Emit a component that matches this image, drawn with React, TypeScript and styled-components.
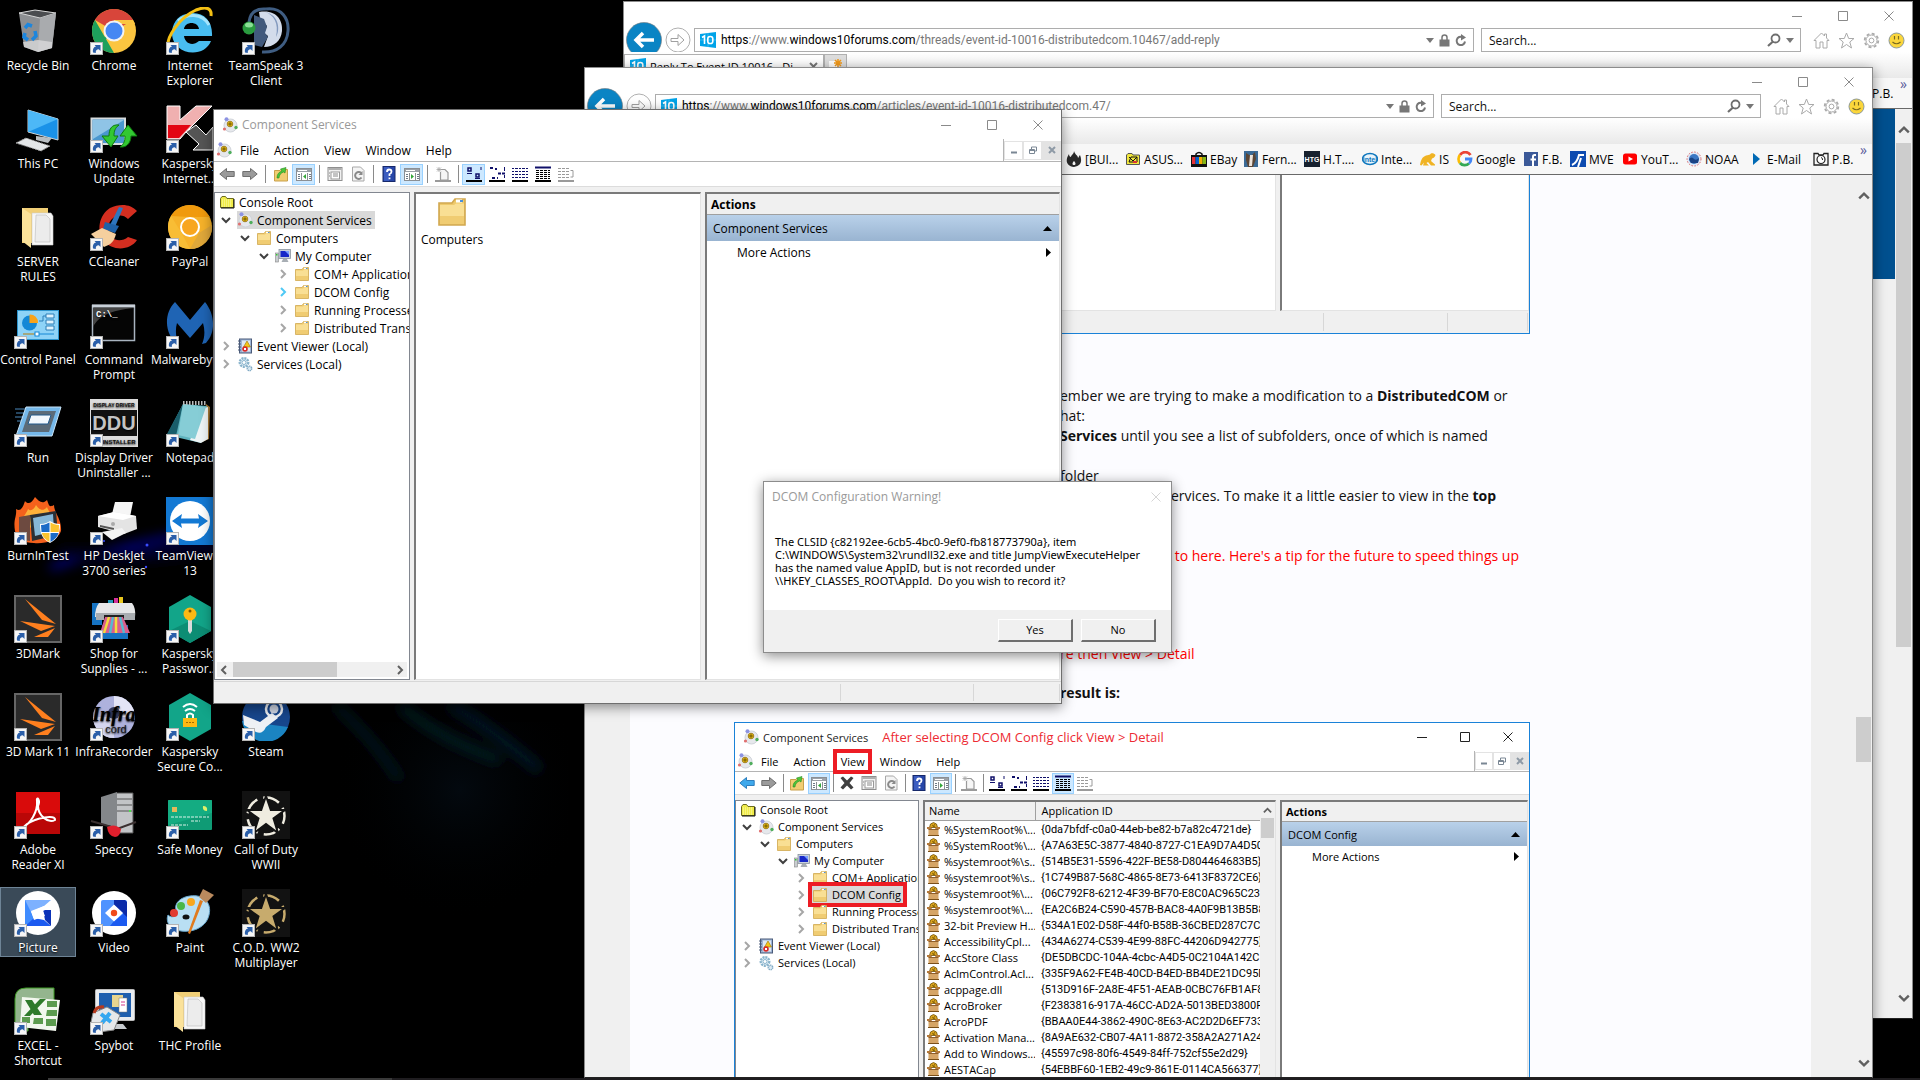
import React from 'react';
import styled, { createGlobalStyle, css, ThemeProvider } from 'styled-components';

/* ---------------------------------------------------------------- base */

const Global = createGlobalStyle`
  html, body { margin: 0; padding: 0; background: #000; overflow: hidden; }
  *, *::before, *::after { box-sizing: border-box; }
  button, input { font: inherit; color: inherit; }
  button { background: none; border: 0; padding: 0; text-align: left; cursor: default; }
  svg { display: block; flex: none; }
`;

const ui = '"Open Sans", "Noto Sans", sans-serif';

const Desktop = styled.main`
  position: relative;
  width: 100%;
  height: 100vh;
  overflow: hidden;
  background: #000;
  color: #000;
  font-family: ${ui};
  font-size: 12px;
  line-height: 15px;
`;

const Wallpaper = styled.svg`
  position: absolute;
  inset: 0;
`;

/* ------------------------------------------------------- desktop icons */

const IconGrid = styled.div`
  position: relative;
  display: grid;
  width: max-content;
  padding-top: 5px;
  grid-template-columns: repeat(4, 76px);
  grid-template-rows: repeat(11, 98px);
  align-items: start;
`;

const IconCell = styled.button<{ $col: number; $row: number; $selected?: boolean }>`
  grid-column: ${p => p.$col};
  grid-row: ${p => p.$row};
  display: flex;
  flex-direction: column;
  align-items: center;
  gap: 3px;
  height: 70px;
  padding-top: 2px;
  color: #fff;
  white-space: pre;
  text-align: center;
  text-shadow: 0 1px 2px #000;
  ${p => p.$selected && css`
    background: #3a4a58;
    box-shadow: inset 0 0 0 1px #6e8496;
  `}
`;

const Shortcut = () => (
  <g>
    <rect x="0.5" y="35.500" width="12" height="12" fill="#f6f6f6" stroke="#b4b4b4" />
    <path d="M3 45.500C2.500 41.500 4 40 6 39.500L4.500 38H10.500V44L8.800 42.200C6.500 42.500 5.500 43.500 5.800 46Z" fill="#2b5fa9" />
  </g>
);

const star = 'M24 5L28.800 19H43L31.500 27.500L36 42L24 33L12 42L16.500 27.500L5 19H19.200Z';

const starIcon = (color: string) => (
  <>
    <rect width="48" height="48" fill="#121212" />
    <circle cx="24" cy="25" r="18.500" fill="none" stroke={color} strokeWidth="2.500" strokeDasharray="17 6.200" strokeDashoffset="9" />
    <path d={star} fill={color} stroke="#121212" strokeWidth="2" />
  </>
);

const folderArt = (
  <>
    <path d="M8 5H34V40H8Z" fill="#f1cf77" />
    <path d="M18 10H37L39 13V42H18Z" fill="#f7f7f7" stroke="#ccc" strokeWidth="0.6" />
    <path d="M22 12H32L36 16V39H21Z" fill="#ececec" stroke="#bbb" strokeWidth="0.6" />
    <path d="M8 5L17 11V45L8 38Z" fill="#fbe29a" />
  </>
);

const markArt = (
  <>
    <rect x="1" y="1" width="46" height="46" fill="#2a2a2a" stroke="#666" strokeWidth="2" />
    <path d="M11 4L42 29L28 25Z" fill="#ff7f1e" />
    <path d="M6 26L41 31L27 36Z" fill="#ff7f1e" />
    <path d="M20 42L41 33L34 42Z" fill="#ff7f1e" />
  </>
);

const hexArt = <path d="M24 0L45 12V36L24 48L3 36V12Z" fill="#12a589" />;

const art: Record<string, React.ReactNode> = {
  bin: (
    <>
      <path d="M5 6L21 3L42 6L38 41L24 45L10 40Z" fill="#8d8f92" />
      <path d="M5 6L21 3L42 6L26 11Z" fill="#4b4d50" stroke="#d5d5d5" strokeWidth="1" />
      <path d="M26 11L42 6L38 41L24 45Z" fill="#a9abae" />
      <path d="M9 35L24 33L38 35L38 41L24 45L10 40Z" fill="#d9dadb" opacity="0.8" />
      <path d="M11 21L14 17.500L18 19M21 24L22 29L18 33M14 33L10 30L11 26" fill="none" stroke="#1d86dd" strokeWidth="3.500" />
    </>
  ),
  pc: (
    <>
      <path d="M14 5L44 14V35L14 27Z" fill="#1a92e8" stroke="#cfd6da" strokeWidth="1" />
      <path d="M14 5L44 14L14 27Z" fill="#4db8f7" />
      <path d="M22 31L38 33L34 38L22 35Z" fill="#b8bec2" />
      <path d="M2 38L12 33L36 41L27 46Z" fill="#e3e6e8" stroke="#999" strokeWidth="1" strokeDasharray="2 1" />
    </>
  ),
  folder: folderArt,
  control: (
    <>
      <rect x="3.500" y="9.500" width="41" height="29" fill="#8ed3f7" stroke="#2c93cc" />
      <circle cx="15.500" cy="22" r="7.500" fill="#1488d6" />
      <path d="M15.500 22V13.500A8 8 0 0 1 24 22Z" fill="#f7a31b" />
      <path d="M25 20H29V15H33" fill="none" stroke="#2c7fb8" />
      <path d="M32 13H40V17H32ZM32 19H40V23H32ZM32 25H40V29H32Z" fill="#dff3fd" stroke="#2c7fb8" />
      <path d="M9 33H40" stroke="#1488d6" /><path d="M9 33H20" stroke="#f7a31b" /><rect x="21" y="31" width="4" height="4" fill="#fff" stroke="#1488d6" />
    </>
  ),
  run: (
    <>
      <path d="M1 10H14M2 14H12M1 18H11M3 22H9" stroke="#4b89bd" />
      <path d="M12 8H47L38 37H2Z" fill="#75b8ea" stroke="#c8e4f8" />
      <path d="M15 12H42L35 33H8Z" fill="#5c6b78" />
      <path d="M17 16H37L34 25H14Z" fill="#f3f8fd" stroke="#235a8c" />
    </>
  ),
  burn: (
    <>
      <path d="M1 34C-1 22 3 20 2 12C7 15 9 10 11 4C14 8 18 6 21 0C25 4 28 8 33 3C35 8 35 11 40 8C40 16 48 22 47 34C44 44 30 47 20 46C10 46 3 42 1 34Z" fill="#f4611c" />
      <path d="M8 30C7 20 12 18 14 12C17 15 20 12 22 8C26 14 30 14 33 10C35 16 42 22 40 32Z" fill="#fdb13a" />
      <path d="M5 20L16 18V44L5 42Z" fill="#6d4a40" />
      <path d="M16 18L42 14L44 38L18 44Z" fill="#2a2f35" /><path d="M19 21L39 17L40 34L21 39Z" fill="#86b8d8" />
      <path d="M26 27C31 27 34 25 36 24C39 26 42 27 46 27C46 38 43 42 36 46C29 42 26 38 26 27Z" fill="#fff" />
      <path d="M27 28C31 28 34 26 35.500 25.500V35H27.500ZM36.500 36H44.500C43.500 40 41 42.500 36.500 45Z" fill="#1a6bc7" />
      <path d="M36.500 25.500C39 27 42 28 45 28L44.800 35H36.500ZM35.500 36H27.800C29 40 31 42.500 35.500 45Z" fill="#fbc32f" />
    </>
  ),
  mark: markArt,
  adobe: (
    <>
      <rect x="2" y="1" width="44" height="42" fill="#d90b0b" /><rect x="2" y="22" width="44" height="21" fill="#a50505" opacity="0.6" />
      <path d="M9 36C16 33 24 21 23 10C22 5 27 8 24 15C24 24 34 33 41 29C42 23 22 27 13 33C8 37 8 39 10 37" fill="none" stroke="#fff" strokeWidth="2" />
    </>
  ),
  picture: (
    <>
      <circle cx="24" cy="24" r="22" fill="#fff" />
      <path d="M11 11H37L30 17L17 23L20 30L11 37Z" fill="#7db1ff" /><path d="M11 11L17 23L20 30L11 37Z" fill="#3f8cff" />
      <path d="M11 37L20 29L30 31L37 37Z" fill="#1b5af0" /><path d="M29 21H37V37L31 31Z" fill="#0a32b8" />
      <path d="M17 22L30 17L31 21L29 22L31 27L20 31Z" fill="#fff" />
    </>
  ),
  excel: (
    <>
      <path d="M1 12Q1 1 12 1H40V22H14V44H1Z" fill="#94b58e" stroke="#3f9a24" />
      <path d="M8 10L46 13L42 44L6 40Z" fill="#f2f7ee" />
      <path d="M33 14H43V20H33ZM33 23H43V29H32ZM32 32H42V39H32ZM20 31H29V37H19ZM8 30H16V36H8Z" fill="#5c9b4f" />
      <path d="M11 13L18 13L28 28H20ZM26 12H32L16 29H10Z" fill="#2e7a2a" />
    </>
  ),
  chrome: (
    <>
      <circle cx="24" cy="24" r="22" fill="#fbc540" />
      <path d="M24 24L4.950 13A22 22 0 0 1 43.050 13Z" fill="#d8453a" />
      <path d="M4.950 13L14.500 29.500L24 34L24 46A22 22 0 0 1 4.950 13Z" fill="#1ea05c" />
      <path d="M33.500 29.500L24 46L16 32Z" fill="#fbc540" />
      <path d="M24 13H43.050A22 22 0 0 1 45 17H24Z" fill="#fbc540" />
      <circle cx="24" cy="24" r="10.500" fill="#f3f3f3" /><circle cx="24" cy="24" r="8.500" fill="#4587f3" />
    </>
  ),
  update: (
    <>
      <path d="M1.500 13.500H35V39H1.500Z" fill="#4a97cf" stroke="#d6dbde" strokeWidth="2" /><path d="M3 15H34L3 34Z" fill="#8fc4e6" />
      <path d="M29 20C21 19 19 25 19 31H12L21 42L28 31H24C24 26 25 23 29 20Z" fill="#32c832" stroke="#0e7a0e" />
      <path d="M30 42C38 43 41 36 41 31H47L38 20L30 31H35C35 36 34 39 30 42Z" fill="#32c832" stroke="#0e7a0e" />
    </>
  ),
  ccleaner: (
    <>
      <path d="M47 8L38 16C30 8 18 15 18 26C19 38 31 40 38 34L47 37C40 48 22 48 14 38C6 28 9 12 20 5C30 0 41 1 47 8Z" fill="#d42e20" />
      <path d="M29 4L33 5L25 24L20 22Z" fill="#2e75bd" /><path d="M15 19L29 23L25 30L13 26Z" fill="#1f62a8" />
      <path d="M12 25L26 31C24 38 22 41 14 44L1 31Z" fill="#f5cf9e" />
    </>
  ),
  cmd: (
    <>
      <rect x="2.500" y="4.500" width="42" height="35" fill="#050505" stroke="#a8b3bf" strokeWidth="1.500" />
      <rect x="2" y="3.500" width="43" height="3" fill="#c8d0d8" /><path d="M3 7H44C20 9 8 16 3 26Z" fill="#444" />
      <text x="6" y="16" fontFamily="Liberation Mono, monospace" fontSize="9" fontWeight="700" fill="#fff">C:\_</text>
    </>
  ),
  ddu: (
    <>
      <rect width="48" height="48" fill="#dcdcdc" /><rect x="1" y="11" width="46" height="26" fill="#111" />
      <text x="24" y="8" textAnchor="middle" fontFamily="Liberation Sans, sans-serif" fontSize="5" fontWeight="700" fill="#111">DISPLAY DRIVER</text>
      <text x="24" y="31" textAnchor="middle" fontFamily="Liberation Sans, sans-serif" fontSize="20" fontWeight="700" fill="#c4c4c4">DDU</text>
      <text x="29" y="45" textAnchor="middle" fontFamily="Liberation Sans, sans-serif" fontSize="6" fontWeight="700" fill="#111">INSTALLER</text>
    </>
  ),
  printer: (
    <>
      <path d="M25 5H43L40 20L22 17Z" fill="#f6f6f6" /><path d="M8 19L24 15L46 19L47 32L34 37L8 30Z" fill="#e4e4e4" />
      <path d="M8 19L24 15L46 19L33 23Z" fill="#fff" /><circle cx="23" cy="27" r="2" fill="#aaa" />
      <path d="M10 28L24 31V33L10 30Z" fill="#555" /><path d="M12 35L32 31L36 36L22 43Z" fill="#f3f3f3" />
    </>
  ),
  shop: (
    <>
      <path d="M2 8H12V44H38V30H2Z" fill="#1673c2" /><path d="M18 5H23V10H18Z" fill="#29b" /><path d="M24 3H28V10H24Z" fill="#d3329a" /><path d="M29 2H33V10H29Z" fill="#e9c71e" />
      <path d="M15 22H33L40 38H10Z" fill="#d95f8e" /><path d="M19 22L14 38M26 22V38" stroke="#f4dc3c" strokeWidth="2.500" /><path d="M23 22L20 38M30 22L34 38" stroke="#58b9cf" strokeWidth="2.500" />
      <path d="M9 8H42Q46 13 45 22H5Q5 13 9 8Z" fill="#e6e7e8" /><path d="M6 18H45V25H34V20H14V25H6Z" fill="#a9adb1" /><path d="M14 20H34V22H14Z" fill="#222" />
    </>
  ),
  infra: (
    <>
      <circle cx="24" cy="24" r="21" fill="#aeb2dd" /><path d="M24 3A21 21 0 0 1 45 24L24 24Z" fill="#e3e4f6" /><path d="M24 45A21 21 0 0 1 3 24L24 24Z" fill="#d4d5ee" />
      <circle cx="24" cy="20" r="6" fill="#333a60" />
      <text x="24" y="28" textAnchor="middle" fontFamily="Liberation Serif, serif" fontStyle="italic" fontWeight="700" fontSize="20" fill="#000">Infra</text>
      <text x="26" y="40" textAnchor="middle" fontFamily="Liberation Sans, sans-serif" fontSize="11" fill="#111">cord</text>
    </>
  ),
  speccy: (
    <>
      <path d="M26 2H43V42H26Z" fill="#c2c4c6" stroke="#555" /><path d="M27 8H42M27 14H42M27 20H42" stroke="#555" /><path d="M11 6L27 1V36L11 33Z" fill="#84878a" />
      <circle cx="40" cy="20" r="1" fill="#3f3" />
      <path d="M1 30L15 34L27 38L46 31" fill="none" stroke="#3a3030" strokeWidth="2" /><path d="M17 36Q25 32 31 38Q30 46 25 46Q18 45 17 36Z" fill="#e01f2c" />
    </>
  ),
  video: (
    <>
      <circle cx="24" cy="24" r="22" fill="#fff" /><rect x="11" y="11" width="26" height="26" rx="2" fill="#4f93ff" />
      <path d="M37 22V37H20L24 32Z" fill="#1b5af0" /><path d="M24 11H35L37 13V28L24 16Z" fill="#0a2aa8" />
      <path d="M24 15.500L33 24L24 32.500L15 24Z" fill="#fff" /><circle cx="24" cy="24" r="3.200" fill="#f04a18" />
    </>
  ),
  spybot: (
    <>
      <rect x="5.500" y="2.500" width="39" height="31" rx="1" fill="#e9ecef" stroke="#bbb" /><rect x="9" y="6" width="32" height="24" fill="#1f5fae" />
      <path d="M22 8H33V20H22Z" fill="#e6d48f" /><path d="M29 11H37V25H29Z" fill="#fff" stroke="#777" strokeWidth="0.5" /><path d="M31 15H35M31 18H35" stroke="#d23a8c" />
      <path d="M26 37H33L37 42H24Z" fill="#c7cbcf" />
      <path d="M3 26L17 20L30 28L24 43L9 45L1 35Z" fill="#e6e8ea" stroke="#888" /><path d="M4 26Q6 19 14 20" fill="none" stroke="#b63a1e" strokeWidth="3" />
      <path d="M11 27L21 35M20 26L12 36" stroke="#35a7f0" strokeWidth="4" />
    </>
  ),
  ie: (
    <>
      <path fillRule="evenodd" d="M46 29H18C19 36 26 40 33 34H45C40 47 22 49 12 40C1 30 6 10 20 7C36 3 47 13 46 29ZM18 22H33C32 14 19 14 18 22Z" fill="#49bdf0" />
      <path d="M12 14C20 7 36 5 43 18" fill="none" stroke="#a4e3fb" strokeWidth="3" />
      <path d="M3 42C-2 32 14 10 30 3C40 -1 46 1 45 9" fill="none" stroke="#f4c014" strokeWidth="3" />
    </>
  ),
  kaspersky: (
    <>
      <path d="M1 1H14V15L30 1H46L20 27L14 34H1Z" fill="#f0b0b0" stroke="#fff" /><path d="M2 20H25L13 33H2Z" fill="#e30613" />
      <path d="M20 27L30 20L40 30L47 22V45H27L33 39Z" fill="#555" stroke="#fff" />
    </>
  ),
  paypal: (
    <>
      <circle cx="24" cy="24" r="22" fill="#f6b22a" /><path d="M24 14L4.950 13A22 22 0 0 1 43.050 13L44 14Z" fill="#f09a0d" />
      <path d="M5 13L15 29L24 46A22 22 0 0 1 5 13Z" fill="#f8bd35" /><path d="M33 30L46 22A22 22 0 0 1 24 46Z" fill="#e0a83a" />
      <circle cx="24" cy="24" r="9" fill="#f8a61f" stroke="#fff" strokeWidth="2" />
    </>
  ),
  malware: <path d="M9 1L24 19L39 1C48 12 51 30 40 42L36 43C39 36 39 29 37 22L24 37L11 22C9 29 10 36 12 43C0 36 -4 14 9 1Z" fill="#1f64b4" />,
  notepad: (
    <>
      <path d="M40 5L44 8L43 40L36 43Z" fill="#a87a35" /><path d="M17 5L41 7L35 44L1 36Z" fill="#5fb3be" /><path d="M17 5L1 35L10 37Z" fill="#195d6a" />
      <path d="M38 9L42 8V40L35 44L24 41Z" fill="#eef4f5" /><path d="M17 5L40 8L29 40L12 36Z" fill="#86cdd6" /><path d="M17 4H41" stroke="#bbb" strokeWidth="4" strokeDasharray="1.500 1.500" />
    </>
  ),
  teamviewer: (
    <>
      <rect width="48" height="48" fill="#1379d4" /><circle cx="24" cy="24" r="20" fill="#fff" />
      <path d="M6 24L16 17L15 21.500H33L32 17L42 24L32 31L33 26.500H15L16 31Z" fill="#1379d4" />
    </>
  ),
  kpass: (
    <>
      {hexArt}<path d="M3 36L24 26L45 36L24 48Z" fill="#0c8d74" />
      <path d="M22 24H26V36L24 39L22 36Z" fill="#d8dcdc" /><circle cx="24" cy="19" r="6.500" fill="#fcb913" /><circle cx="24" cy="16" r="1.500" fill="#7a5600" />
    </>
  ),
  ksecure: (
    <>
      {hexArt}<path d="M17 14Q24 8 31 14M19 18Q24 14 29 18" fill="none" stroke="#fff" strokeWidth="2" />
      <path d="M21 26V22Q24 19 27 22V26" fill="none" stroke="#fff" strokeWidth="2" /><rect x="17" y="25" width="14" height="9" fill="#fcb913" />
      <path d="M20 29.500H28" stroke="#a06c00" strokeDasharray="2 1" />
    </>
  ),
  money: (
    <>
      <rect x="2" y="9" width="44" height="30" rx="1" fill="#0f9b75" /><path d="M2 9H46V22L2 34Z" fill="#18b78b" opacity="0.600" />
      <rect x="6" y="16" width="5" height="5" fill="#e5b95a" /><path d="M37 15Q42 15 41 20Q36 20 37 15Z" fill="#dff06a" />
      <path d="M5 26H43M25 30H34M5 34H22" stroke="#d7f2e8" strokeDasharray="3 1" />
    </>
  ),
  paint: (
    <>
      <path d="M24 7C38 5 46 14 43 26C40 40 22 46 8 40C2 38 0 30 2 26C6 30 13 27 10 21C8 14 15 8 24 7Z" fill="#b9dff3" stroke="#6aa9cf" />
      <circle cx="8" cy="24" r="4" fill="#e23b31" /><circle cx="15" cy="17" r="4" fill="#4bb748" /><circle cx="25" cy="13" r="4" fill="#f9a61c" /><ellipse cx="20" cy="28" rx="3.500" ry="2.500" fill="#111" />
      <path d="M37 12L24 45L22 44L34 11Z" fill="#e07a1c" /><path d="M33 8L37 0L48 6L40 14Z" fill="#b98a5e" />
    </>
  ),
  teamspeak: (
    <>
      <path d="M24 2C12 1 8 8 7 15M24 2C40 0 47 12 46 24C45 38 35 46 20 45" fill="none" stroke="#3f5d82" strokeWidth="3" />
      <path d="M17 5C34 2 41 13 40 24C39 34 32 40 22 40L26 29L22 26L25 19L18 12Z" fill="#d3dceb" /><path d="M23 5C32 8 37 16 34 30C38 24 38 8 23 5Z" fill="#8299be" />
      <path d="M12 8L22 12L25 20L23 26L26 30L20 40L12 38Z" fill="#41597c" />
      <circle cx="7" cy="21" r="6.500" fill="#2a9b3f" /><ellipse cx="7" cy="18" rx="4" ry="2.500" fill="#8be096" />
    </>
  ),
  steam: (
    <>
      <circle cx="24" cy="24" r="24" fill="#17468c" /><path d="M0 28A24 24 0 0 0 46 34Z" fill="#1b84c2" />
      <path d="M1 22L18 29L30 20L36 25L24 34Q20 43 12 38L2 32Z" fill="#eef1f5" />
      <circle cx="32" cy="16" r="8" fill="none" stroke="#eef1f5" strokeWidth="2.500" /><circle cx="32" cy="16" r="4.500" fill="#cfd6e4" />
    </>
  ),
  cod: starIcon('#efece0'),
  codmp: starIcon('#c7ab6d'),
};

type DesktopItem = [string, string, number, number, boolean];
const items: DesktopItem[] = [
  ['bin', 'Recycle Bin', 1, 1, false], ['pc', 'This PC', 1, 2, false], ['folder', 'SERVER\nRULES', 1, 3, false],
  ['control', 'Control Panel', 1, 4, true], ['run', 'Run', 1, 5, true], ['burn', 'BurnInTest', 1, 6, true],
  ['mark', '3DMark', 1, 7, true], ['mark', '3D Mark 11', 1, 8, true], ['adobe', 'Adobe\nReader XI', 1, 9, true],
  ['picture', 'Picture', 1, 10, true], ['excel', 'EXCEL -\nShortcut', 1, 11, true],
  ['chrome', 'Chrome', 2, 1, true], ['update', 'Windows\nUpdate', 2, 2, true], ['ccleaner', 'CCleaner', 2, 3, true],
  ['cmd', 'Command\nPrompt', 2, 4, true], ['ddu', 'Display Driver\nUninstaller ...', 2, 5, true],
  ['printer', 'HP DeskJet\n3700 series', 2, 6, true], ['shop', 'Shop for\nSupplies - ...', 2, 7, true],
  ['infra', 'InfraRecorder', 2, 8, true], ['speccy', 'Speccy', 2, 9, true], ['video', 'Video', 2, 10, true], ['spybot', 'Spybot', 2, 11, true],
  ['ie', 'Internet\nExplorer', 3, 1, true], ['kaspersky', 'Kaspersky\nInternet...', 3, 2, true], ['paypal', 'PayPal', 3, 3, true],
  ['malware', 'Malwarebytes', 3, 4, true], ['notepad', 'Notepad', 3, 5, true], ['teamviewer', 'TeamViewer\n13', 3, 6, true],
  ['kpass', 'Kaspersky\nPasswor...', 3, 7, true], ['ksecure', 'Kaspersky\nSecure Co...', 3, 8, true],
  ['money', 'Safe Money', 3, 9, true], ['paint', 'Paint', 3, 10, true], ['folder', 'THC Profile', 3, 11, false],
  ['teamspeak', 'TeamSpeak 3\nClient', 4, 1, true], ['steam', 'Steam', 4, 8, true],
  ['cod', 'Call of Duty\nWWII', 4, 9, true], ['codmp', 'C.O.D. WW2\nMultiplayer', 4, 10, true],
];

const DesktopIcons = () => (
  <IconGrid>
    {items.map(([id, label, col, row, link]) => (
      <IconCell key={label} $col={col} $row={row} $selected={id === 'picture'}>
        <svg width="48" height="48" viewBox="0 0 48 48" aria-hidden="true">{art[id]}{link && <Shortcut />}</svg>
        {label}
      </IconCell>
    ))}
  </IconGrid>
);

/* -------------------------------------------------------- small glyphs */

const Chevron = ({ dir, color = '#606060', size = 10, weight = 2 }: { dir: 'up' | 'down' | 'left' | 'right'; color?: string; size?: number; weight?: number }) => {
  const d = { up: 'M1 7L5 3L9 7', down: 'M1 3L5 7L9 3', left: 'M7 1L3 5L7 9', right: 'M3 1L7 5L3 9' }[dir];
  return <svg width={size} height={size} viewBox="0 0 10 10"><path d={d} fill="none" stroke={color} strokeWidth={weight} /></svg>;
};

const ServicesIcon = ({ size = 16 }: { size?: number }) => (
  <svg width={size} height={size} viewBox="0 0 16 16">
    <circle cx="8.500" cy="8.500" r="6.500" fill="#e6e8ec" stroke="#d0d4da" />
    <circle cx="8" cy="7" r="2.800" fill="#f6c715" stroke="#8a6a10" strokeWidth="0.800" />
    <path d="M8 5V9M6 7H10" stroke="#4f3c00" strokeWidth="0.800" />
    <circle cx="4.500" cy="2.200" r="2" fill="#8d93e2" /><circle cx="2.500" cy="12" r="1.600" fill="#e07070" /><circle cx="14" cy="10.500" r="1.700" fill="#4fae5c" />
  </svg>
);

const FolderIcon = ({ size = 16 }: { size?: number }) => (
  <svg width={size} height={size} viewBox="0 0 16 16">
    <path d="M1.500 3.500H8L9.500 1.500H14.500V14.500H1.500Z" fill="#eec96b" stroke="#d1a850" strokeWidth="0.800" />
    <path d="M10 2.500H13" stroke="#fff" strokeWidth="1.500" /><path d="M12 2.500H13.500" stroke="#4a90d9" />
    <path d="M2 4.500H9L10 3.800H14V14H2Z" fill="#f9df94" /><path d="M2 10H14V14H2Z" fill="#f0cc72" />
  </svg>
);

const RootIcon = () => (
  <svg width="16" height="16" viewBox="0 0 16 16">
    <path d="M1.500 13.500V4.500L3 2.500H6.500L8 4.500H14.500V13.500Z" fill="#f0ec4a" stroke="#6c6c20" /><path d="M2 14H15V5" fill="none" stroke="#111" />
    <path d="M3 6H13M3 8H13M3 10H13M3 12H13" stroke="#fdfbb4" strokeDasharray="1 1" />
  </svg>
);

const ComputerIcon = () => (
  <svg width="16" height="16" viewBox="0 0 16 16">
    <rect x="0.500" y="5" width="3" height="9" fill="#c8ccd0" stroke="#888" strokeWidth="0.600" /><rect x="1" y="6" width="1.500" height="1.500" fill="#3c3" />
    <rect x="4" y="1.500" width="11.500" height="9" fill="#c8d0dc" stroke="#8a94a0" strokeWidth="0.800" /><rect x="5.500" y="3" width="8.500" height="6" fill="#1728c8" />
    <path d="M10 3H14V7Z" fill="#7aa0ff" /><path d="M8 11H12L13.500 14H6.500Z" fill="#a8aeb4" />
  </svg>
);

const EventIcon = () => (
  <svg width="16" height="16" viewBox="0 0 16 16">
    <rect x="2.500" y="1" width="12" height="14" fill="#9db4d6" stroke="#4a5a78" /><path d="M1 3H4M1 6H4M1 9H4M1 12H4" stroke="#4a5a78" />
    <rect x="5" y="2.500" width="8" height="11" fill="#dfe7f2" /><path d="M10 3L13.500 9H6.500Z" fill="#f5c518" stroke="#9a7400" strokeWidth="0.600" />
    <circle cx="8" cy="11" r="2.800" fill="#d92b2b" /><path d="M7 10L9 12M9 10L7 12" stroke="#fff" />
  </svg>
);

const GearsIcon = () => (
  <svg width="16" height="16" viewBox="0 0 16 16">
    <circle cx="7" cy="6.500" r="4.200" fill="#e6f1f8" stroke="#8ab4cc" strokeWidth="2.500" strokeDasharray="2 0.800" />
    <circle cx="7" cy="6.500" r="2" fill="#fff" stroke="#8ab4cc" />
    <circle cx="12.500" cy="12.500" r="2.200" fill="#dceaf3" stroke="#7fa9c4" strokeWidth="1.500" strokeDasharray="1.200 0.600" />
  </svg>
);

const BoxIcon = () => (
  <svg width="13" height="15" viewBox="0 0 13 15">
    <path d="M2.500 5.500L3.500 2L6.500 0.500L9.500 2L10.500 5.500Z" fill="#dca51e" stroke="#6e5208" strokeWidth="0.800" /><path d="M5 3L8 5M8 2L6 5" stroke="#7a5a08" strokeWidth="0.800" />
    <path d="M0 5H4L5 7H0ZM13 5H9L8 7H13Z" fill="#b5793a" /><rect x="1.500" y="7" width="10" height="6.500" fill="#d6a566" /><path d="M1.500 7.500H11.500" stroke="#8e5f2c" />
    <path d="M1 13.500H12" stroke="#7a4f18" />
  </svg>
);

/* ------------------------------------------------------ toolbar glyphs */

const arrowArt = (fill: string, stroke: string, flip: boolean) => (
  <g transform={flip ? 'translate(16 0) scale(-1 1)' : undefined}>
    <path d="M0.800 8L7.500 2.500V5.500H15.200V10.500H7.500V13.500Z" fill={fill} stroke={stroke} />
  </g>
);

const paneArt = (tri: string) => (
  <>
    <rect x="0.500" y="2.500" width="15" height="12" fill="#fff" stroke="#8b8f94" /><rect x="1" y="3" width="14" height="3" fill="#9ba1a8" />
    <path d="M2 4.500H11" stroke="#fff" /><path d="M5.500 7V14M11.500 7V14" stroke="#8b8f94" /><path d="M2 8.500H4M2 10.500H4M2 12.500H4M13 8.500H15M13 10.500H15M13 12.500H15" stroke="#6d7a88" />
    <path d={tri} fill="#35a83a" />
  </>
);

const navy = '#10106a';
const tools: Record<string, React.ReactNode> = {
  back: arrowArt('#9b9b9b', '#6f6f6f', false),
  backOn: arrowArt('#3fa9ec', '#2f7fbd', false),
  fwd: arrowArt('#9b9b9b', '#6f6f6f', true),
  up: (
    <>
      <path d="M1.500 4.500H7L8 3.500H14.500V15H1.500Z" fill="#f2cd73" stroke="#c9a04a" />
      <path d="M4 12C4 8 6 6 9 5L7.500 3L13 1.500L12 7L10.500 6C8 7 6 9 6 12Z" fill="#4cc83c" stroke="#2a8a20" strokeWidth="0.600" />
    </>
  ),
  tree: paneArt('M10 8V13L7 10.500Z'),
  pane: paneArt('M7 8V13L10 10.500Z'),
  del: <path d="M1.500 3L4 1.500L8 5.500L12 1.500L14.500 3L10.500 8L14.500 12.500L12 14.500L8 10.500L4 14.500L1.500 12.500L5.500 8Z" fill="#3f3f3f" />,
  props: <><rect x="1" y="1.500" width="14" height="13" fill="#f1f1f1" stroke="#8f8f8f" /><rect x="1.500" y="2" width="13" height="2" fill="#b0b0b0" /><rect x="4" y="6" width="8.500" height="7" fill="#fff" stroke="#999" /><path d="M6 8H11M6 10H11M2 7H3M2 10H3" stroke="#888" /></>,
  refresh: <><path d="M2.500 1H10.500L14 4.500V15H2.500Z" fill="#f4f4f4" stroke="#a8a8a8" /><path d="M11.500 7.500A3.500 3.500 0 1 0 11.500 11.500" fill="none" stroke="#8a8a8a" strokeWidth="2" /><path d="M12.500 5V9H8.500Z" fill="#8a8a8a" /></>,
  help: <><rect x="2" y="0.500" width="12" height="15" fill="#2746a8" stroke="#16286a" /><rect x="3" y="1" width="5" height="14" fill="#4a6ad0" opacity="0.600" /><path d="M6 6Q6 3.500 8.200 3.500Q10.500 3.500 10.500 5.800Q10.500 7.300 8.500 8.300V10M8.500 11.500V13.300" fill="none" stroke="#fff" strokeWidth="1.800" /></>,
  newv: <><path d="M5.500 3.500H10L13 6.500V14H5.500V6" fill="#f6f6f6" stroke="#9a9a9a" strokeWidth="1.200" /><path d="M4 1V6M1.500 3.500H6.500M2 1.500L6 5.500M6 1.500L2 5.500" stroke="#a4a4a4" strokeWidth="0.800" /><path d="M0 15H16" stroke="#9a9a9a" strokeWidth="2" /></>,
  v1: <><path d="M2 2H5V5H2ZM10 8H13V11H10Z" fill="none" stroke={navy} strokeWidth="1.500" /><path d="M1 7.500H6M9 12.500H14M15 1V4" stroke={navy} /><path d="M0 15H16" stroke="#000" strokeWidth="2" /></>,
  v2: <><path d="M1 2H4M6 3H8M9 7.500H12M13 7.500H16M3 12H6M8 12H9" stroke={navy} strokeWidth="1.800" /><path d="M15.500 1V5M15.500 9V12" stroke={navy} /><path d="M0 15H16" stroke="#000" strokeWidth="2" /></>,
  v3: <><path d="M0 2.500H16M0 5.500H16M0 8.500H16M0 11.500H16" stroke={navy} strokeDasharray="2 1 3 1" /><path d="M0 15H16" stroke="#000" strokeWidth="2" /></>,
  v4: <><path d="M0 1.500H16" stroke={navy} strokeWidth="2" /><path d="M1 4.500H15M1 6.500H15M1 8.500H15M1 10.500H15M1 12.500H15" stroke="#000" strokeDasharray="3 1" /><path d="M0 15H16" stroke="#000" strokeWidth="2" /></>,
  v5: <><path d="M0 2.500H11M0 5.500H11M0 8.500H11M0 11.500H11" stroke="#9a9a9a" strokeDasharray="3 1" /><path d="M12.500 4.500H15V11H12.500" fill="none" stroke="#9a9a9a" /><path d="M0 15H16" stroke="#9a9a9a" strokeWidth="2" /></>,
};

/* ------------------------------------------------ management console UI */

const full = { font: 12, title: 29, menu: 22, bar: 24, btn: 23, sep: 8, row: 18, indent: 19, head: 21, section: 26, cols: '196px 287px 1fr', caption: 46, mdi: 19, titleColor: '#999', edge: '#6f6f6f', gap: 5 };
const small = { font: 11, title: 28, menu: 20, bar: 22, btn: 22, sep: 6, row: 17, indent: 18, head: 20, section: 24, cols: '184px 353px 1fr', caption: 43, mdi: 18, titleColor: '#222', edge: '#1a82d8', gap: 6 };

const Frame = styled.section`
  display: flex;
  flex-direction: column;
  height: 100%;
  border: 1px solid ${p => p.theme.edge};
  background: #fff;
  font-size: ${p => p.theme.font}px;
  line-height: 15px;
`;

const TitleBar = styled.header`
  display: flex;
  align-items: center;
  gap: 4px;
  height: ${p => p.theme.title}px;
  padding-left: 8px;
  color: ${p => p.theme.titleColor};
  flex: none;
`;

const Note = styled.span`
  margin-left: 10px;
  color: #ed2b33;
  font-size: 13px;
`;

const Captions = styled.div<{ $color: string }>`
  display: flex;
  margin-left: auto;
  color: ${p => p.$color};
`;

const CaptionButton = styled.button<{ $w: number }>`
  display: grid;
  place-items: center;
  width: ${p => p.$w}px;
  height: 24px;
`;

const captionPaths = ['M0 5.500H10', 'M0.500 0.500H9.500V9.500H0.500Z', 'M0.500 0.500L9.500 9.500M9.500 0.500L0.500 9.500'];
const WindowButtons = ({ color, w }: { color: string; w: number }) => (
  <Captions $color={color}>
    {['Minimize', 'Maximize', 'Close'].map((n, i) => (
      <CaptionButton key={n} $w={w} aria-label={n}>
        <svg width="10" height="10" viewBox="0 0 10 10"><path d={captionPaths[i]} fill="none" stroke="currentColor" /></svg>
      </CaptionButton>
    ))}
  </Captions>
);

const MenuBar = styled.nav`
  display: flex;
  align-items: center;
  flex: none;
  height: ${p => p.theme.menu + 1}px;
  padding-left: 2px;
  border-bottom: 1px solid #b4b4b4;
`;

const MenuItem = styled.button<{ $marked?: boolean }>`
  position: relative;
  padding: 0 7px 0 8px;
  ${p => p.$marked && css`
    &::after {
      content: '';
      position: absolute;
      inset: -5px 0;
      border: 4px solid #ed1c24;
    }
  `}
`;

const MdiGroup = styled.div`
  display: flex;
  align-self: stretch;
  align-items: center;
  margin-left: auto;
  border-left: 1px solid #b4b4b4;
`;

const MdiButton = styled.button<{ $off?: boolean }>`
  display: grid;
  place-items: center;
  width: ${p => p.theme.mdi}px;
  height: ${p => p.theme.mdi}px;
  border: 1px solid #e3e3e3;
  background: ${p => (p.$off ? '#e3e3e3' : '#fff')};
`;

const ToolBar = styled.div`
  display: flex;
  align-items: center;
  flex: none;
  height: ${p => p.theme.bar + 1}px;
  padding-left: 1px;
  border-bottom: 1px solid #dcdcdc;
`;

const ToolButton = styled.button<{ $on?: boolean }>`
  display: grid;
  place-items: center;
  width: ${p => p.theme.btn}px;
  height: 21px;
  ${p => p.$on && css`background: #cce8ff; border: 1px solid #99d1ff;`}
`;

const ToolSep = styled.span`
  width: ${p => p.theme.sep}px;
  height: 18px;
  background: linear-gradient(#8a8a8a, #8a8a8a) center / 1px 100% no-repeat;
`;

const Body = styled.div`
  flex: 1;
  min-height: 0;
  display: grid;
  grid-template-columns: ${p => p.theme.cols};
  grid-template-rows: minmax(0, 1fr);
  gap: 4px;
  padding: 5px 1px 1px 0;
  background: #f0f0f0;
`;

const TreePane = styled.div`
  display: flex;
  flex-direction: column;
  overflow: hidden;
  padding: 0 2px 2px;
  border: 1px solid #828790;
  background: #fff;
`;

const TreeList = styled.ul`
  flex: 1;
  margin: 0;
  padding: 0;
  list-style: none;
`;

const TreeRow = styled.li<{ $level: number }>`
  display: flex;
  align-items: center;
  height: ${p => p.theme.row}px;
  padding-left: ${p => (p.$level ? (p.$level - 1) * p.theme.indent + 4 : 2)}px;
  white-space: nowrap;
`;

const Twisty = styled.span`
  display: grid;
  flex: none;
  width: 16px;
`;

const TreeLabel = styled.button<{ $selected?: boolean; $marked?: boolean }>`
  position: relative;
  display: flex;
  flex: none;
  align-items: center;
  gap: 4px;
  height: 100%;
  padding-right: 3px;
  ${p => p.$selected && css`background: #d9d9d9;`}
  ${p => p.$marked && css`
    &::after {
      content: '';
      position: absolute;
      inset: -4px -3px -4px -4px;
      border: 4px solid #ed1c24;
    }
  `}
`;

const HScroll = styled.div`
  display: flex;
  align-items: center;
  gap: 4px;
  height: 15px;
  padding: 0 2px;
  background: #f0f0f0;
`;

const HThumb = styled.span`
  width: 104px;
  height: 15px;
  margin-right: auto;
  background: #cdcdcd;
`;

const Sunken = styled.div`
  display: flex;
  flex-direction: column;
  overflow: hidden;
  border: solid;
  border-width: 2px 1px 1px 2px;
  border-color: #7a7a7a #e3e3e3 #e3e3e3 #7a7a7a;
  background: #fff;
`;

const BigItem = styled.button`
  display: flex;
  flex-direction: column;
  align-items: center;
  gap: 4px;
  width: 72px;
  margin: 2px 0 0;
`;

const PaneHead = styled.h2`
  margin: 0;
  padding: 0 4px;
  height: ${p => p.theme.head}px;
  border-bottom: 1px solid #a0a0a0;
  background: #f0f0f0;
  font-size: inherit;
  line-height: ${p => p.theme.head}px;
`;

const ActionRow = styled.button<{ $head?: boolean }>`
  display: flex;
  align-items: center;
  justify-content: space-between;
  height: ${p => p.theme.section - (p.$head ? 0 : 4)}px;
  padding: 0 7px 0 ${p => (p.$head ? 6 : 30)}px;
  ${p => p.$head && css`background: linear-gradient(#b9d1ea, #99b4d1);`}
`;

const Status = styled.footer`
  display: flex;
  justify-content: flex-end;
  flex: none;
  height: 22px;
  padding: 2px 1px;
  border-top: 1px solid #d7d7d7;
  background: #f0f0f0;
`;

const StatusCell = styled.span<{ $w: number }>`
  width: ${p => p.$w}px;
  border-left: 1px solid #d7d7d7;
`;

const TableArea = styled.div`
  display: flex;
  flex: 1;
  min-height: 0;
`;

const TableClip = styled.div`
  flex: 1;
  min-width: 0;
  overflow: hidden;
`;

const Table = styled.table`
  width: 100%;
  border-collapse: collapse;
  table-layout: fixed;
  white-space: nowrap;
  th, td { padding: 0; height: 16px; line-height: 16px; overflow: hidden; text-align: left; font-weight: 400; }
  th { height: 18px; padding-left: 4px; background: #f0f0f0; border-bottom: 1px solid #a0a0a0; }
  th:first-child { width: 110px; }
  th + th { padding-left: 6px; border-left: 1px solid #a0a0a0; }
  tbody tr:first-child td { height: 17px; padding-top: 1px; }
  td + td { padding-left: 6px; font-family: Roboto, sans-serif; }
`;

const AppName = styled.span`
  display: flex;
  align-items: center;
  gap: 4px;
  padding-left: 2px;
`;

const VScroll = styled.div<{ $w: number }>`
  display: flex;
  flex-direction: column;
  align-items: center;
  width: ${p => p.$w}px;
  flex: none;
  background: #f0f0f0;
`;

const ScrollButton = styled.button<{ $h: number; $low?: boolean }>`
  display: grid;
  place-items: center;
  width: 100%;
  height: ${p => p.$h}px;
  padding-top: ${p => (p.$low ? 8 : 0)}px;
`;

const Thumb = styled.span<{ $h: number; $before?: number }>`
  width: calc(100% - 2px);
  height: ${p => p.$h}px;
  margin-top: ${p => p.$before ?? 0}px;
  margin-bottom: auto;
  background: #cdcdcd;
`;

const rows: [string, string][] = [
  ['%SystemRoot%\\...', '{0da7bfdf-c0a0-44eb-be82-b7a82c4721de}'],
  ['%SystemRoot%\\...', '{A7A63E5C-3877-4840-8727-C1EA9D7A4D50'],
  ['%systemroot%\\s...', '{514B5E31-5596-422F-BE58-D804464683B5}'],
  ['%systemroot%\\s...', '{1C749B87-568C-4865-8E73-6413F8372CE6}'],
  ['%systemroot%\\...', '{06C792F8-6212-4F39-BF70-E8C0AC965C23}'],
  ['%systemroot%\\...', '{EA2C6B24-C590-457B-BAC8-4A0F9B13B5B8'],
  ['32-bit Preview H...', '{534A1E02-D58F-44f0-B58B-36CBED287C7C}'],
  ['AccessibilityCpl...', '{434A6274-C539-4E99-88FC-44206D942775}'],
  ['AccStore Class', '{DE5DBCDC-104A-4cbc-A4D5-0C2104A142C'],
  ['AclmControl.Acl...', '{335F9A62-FE4B-40CD-B4ED-BB4DE21DC95D'],
  ['acppage.dll', '{513D916F-2A8E-4F51-AEAB-0CBC76FB1AF8'],
  ['AcroBroker', '{F2383816-917A-46CC-AD2A-5013BED3800F'],
  ['AcroPDF', '{BBAA0E44-3862-490C-8E63-AC2D2D6EF733'],
  ['Activation Mana...', '{8A9AE632-CB07-4A11-8872-358A2A271A24'],
  ['Add to Windows...', '{45597c98-80f6-4549-84ff-752cf55e2d29}'],
  ['AESTACap', '{54EBBF60-1EB2-49c9-861E-0114CA566377}'],
];

const treeItems: [string, number, string, React.ReactNode][] = [
  ['Console Root', 0, '', <RootIcon />],
  ['Component Services', 1, 'open', <ServicesIcon />],
  ['Computers', 2, 'open', <FolderIcon />],
  ['My Computer', 3, 'open', <ComputerIcon />],
  ['COM+ Applications', 4, 'closed', <FolderIcon />],
  ['DCOM Config', 4, 'closed', <FolderIcon />],
  ['Running Processes', 4, 'closed', <FolderIcon />],
  ['Distributed Transaction', 4, 'closed', <FolderIcon />],
  ['Event Viewer (Local)', 1, 'closed', <EventIcon />],
  ['Services (Local)', 1, 'closed', <GearsIcon />],
];

const Console = ({ detail }: { detail?: boolean }) => {
  const bar = detail
    ? ['backOn', 'fwd', '|', 'up', 'tree*', '|', 'del', 'props', 'refresh', '|', 'help', 'pane*', '|', 'newv', '|', 'v1', 'v2', 'v3', 'v4*', 'v5']
    : ['back', 'fwd', '|', 'up', 'tree*', '|', 'props', 'refresh', '|', 'help', 'pane*', '|', 'newv', '|', 'v1*', 'v2', 'v3', 'v4', 'v5'];
  const selected = detail ? 'DCOM Config' : 'Component Services';
  const theme = detail ? small : full;
  return (
    <ThemeProvider theme={theme}>
      <Frame>
        <TitleBar>
          <ServicesIcon />
          Component Services
          {detail && <Note>After selecting DCOM Config click View &gt; Detail</Note>}
          <WindowButtons color={detail ? '#222' : '#8a8a8a'} w={theme.caption} />
        </TitleBar>
        <MenuBar>
          <ServicesIcon />
          {['File', 'Action', 'View', 'Window', 'Help'].map(m => <MenuItem key={m} $marked={detail && m === 'View'}>{m}</MenuItem>)}
          <MdiGroup>
            <MdiButton aria-label="Minimize view"><svg width="8" height="8"><path d="M1 6.500H7" stroke="#7a8794" strokeWidth="2" /></svg></MdiButton>
            <MdiButton aria-label="Restore view"><svg width="8" height="8"><path d="M2.500 3V1H7.500V5H6M0.500 3.500H5.500V7.500H0.500ZM0.500 4.500H5.500" fill="none" stroke="#7a8794" /></svg></MdiButton>
            <MdiButton aria-label="Close view" $off><svg width="8" height="8"><path d="M1 1L7 7M7 1L1 7" stroke="#8e9aa6" strokeWidth="2" /></svg></MdiButton>
          </MdiGroup>
        </MenuBar>
        <ToolBar>
          {bar.map((t, i) => t === '|' ? <ToolSep key={i} /> : (
            <ToolButton key={i} aria-label={t.replace('*', '')} $on={t.endsWith('*')}>
              <svg width="16" height="16" viewBox="0 0 16 16">{tools[t.replace('*', '')]}</svg>
            </ToolButton>
          ))}
        </ToolBar>
        <Body>
          <TreePane>
            <TreeList>
              {treeItems.map(([label, level, state, icon]) => (
                <TreeRow key={label} $level={level}>
                  {state && <Twisty>{state === 'open' ? <Chevron dir="down" color="#404040" /> : <Chevron dir="right" color={!detail && label === 'DCOM Config' ? '#4fc9f5' : '#a6a6a6'} />}</Twisty>}
                  <TreeLabel $selected={label === selected} $marked={detail && label === selected}>{icon}{label}</TreeLabel>
                </TreeRow>
              ))}
            </TreeList>
            {!detail && <HScroll><Chevron dir="left" /><HThumb /><Chevron dir="right" /></HScroll>}
          </TreePane>
          <Sunken>
            {detail ? (
              <TableArea>
                <TableClip>
                  <Table>
                    <thead><tr><th>Name</th><th>Application ID</th></tr></thead>
                    <tbody>{rows.map(([n, id]) => <tr key={id}><td><AppName><BoxIcon />{n}</AppName></td><td>{id}</td></tr>)}</tbody>
                  </Table>
                </TableClip>
                <VScroll $w={15}>
                  <ScrollButton $h={16} aria-label="Scroll up"><Chevron dir="up" size={9} /></ScrollButton>
                  <Thumb $h={20} />
                </VScroll>
              </TableArea>
            ) : <BigItem><FolderIcon size={32} />Computers</BigItem>}
          </Sunken>
          <Sunken>
            <PaneHead>Actions</PaneHead>
            <ActionRow $head>{selected}<svg width="9" height="5"><path d="M0 5L4.500 0L9 5Z" /></svg></ActionRow>
            <ActionRow>More Actions<svg width="7" height="9"><path d="M1 0L6 4.500L1 9Z" /></svg></ActionRow>
          </Sunken>
        </Body>
        <Status><StatusCell $w={133} /><StatusCell $w={86} /><StatusCell $w={1} /></Status>
      </Frame>
    </ThemeProvider>
  );
};

/* ------------------------------------------------------------- browser */

const Win = styled.div`
  position: absolute;
  box-shadow: 0 3px 12px rgba(0, 0, 0, 0.45);
`;
const ReplyWindow = styled(Win)`top: 1px; right: 7px; bottom: 61px; left: 623px;`;
const ArticleWindow = styled(Win)`top: 67px; right: 47px; bottom: 2px; left: 584px;`;
const ConsoleWindow = styled(Win)`top: 109px; left: 213px; width: 849px; height: 595px;`;
const DialogWindow = styled(Win)`top: 481px; left: 763px; width: 409px;`;

const Browser = styled.section`
  display: flex;
  flex-direction: column;
  height: 100%;
  border: 1px solid #8c8c8c;
  border-bottom-color: #222;
  background: #fff;
`;

const BrowserTop = styled.div`
  display: flex;
  height: 26px;
  padding: 2px 0 0;
  flex: none;
`;

const NavRow = styled.div`
  display: flex;
  align-items: center;
  flex: none;
  height: 24px;
  padding: 0 7px 0 2px;
`;

const RoundButton = styled.button`
  margin-right: 3px;
`;

const Field = styled.div<{ $w?: number }>`
  display: flex;
  align-items: center;
  gap: 5px;
  height: 24px;
  padding: 0 6px 0 5px;
  border: 1px solid #adadad;
  ${p => (p.$w ? css`width: ${p.$w}px; margin: 0 12px 0 7px; padding-left: 7px; flex: none;` : css`flex: 1; min-width: 0;`)}
`;

const Address = styled.a`
  flex: 1;
  color: #777;
  font-family: Roboto, sans-serif;
  text-decoration: none;
  white-space: nowrap;
  overflow: hidden;
  b { color: #000; font-weight: 400; }
`;

const SearchInput = styled.input`
  flex: 1;
  min-width: 0;
  border: 0;
  padding: 0;
  outline: 0;
  &::placeholder { color: #111; opacity: 1; }
`;

const NavIcons = styled.div`
  display: flex;
  gap: 8px;
`;

const TabStrip = styled.div`
  display: flex;
  align-items: stretch;
  flex: none;
  height: 26px;
  padding-top: 2px;
  background: linear-gradient(#fff, #e9e9e9);
`;

const Tab = styled.button`
  display: flex;
  align-items: center;
  gap: 4px;
  width: 200px;
  padding: 0 5px;
  border: 1px solid #b0b0b0;
  background: #fff;
  white-space: nowrap;
  svg:last-child { margin-left: auto; }
`;

const TabTitle = styled.span`
  font-size: 11px;
`;

const NewTab = styled.button`
  display: grid;
  place-items: center;
  width: 23px;
  border: 1px solid #b0b0b0;
  background: #ddd;
`;

const Favorites = styled.nav`
  display: flex;
  align-items: center;
  justify-content: flex-end;
  flex: none;
  height: 31px;
  padding-right: 5px;
  background: #f7f7f7;
  border-bottom: 1px solid #696969;
`;

const Favorite = styled.a<{ $w: number }>`
  display: flex;
  align-items: center;
  gap: 3px;
  flex: none;
  width: ${p => p.$w}px;
  color: #000;
  text-decoration: none;
  white-space: nowrap;
`;

const Overflow = styled.button`
  align-self: flex-start;
  height: 12px;
  color: #5a5a9a;
  font-size: 14px;
  line-height: 12px;
`;

const Page = styled.div`
  display: flex;
  flex: 1;
  min-height: 0;
  overflow: hidden;
  background: #f0f0f0;
`;

const Favicon = () => (
  <svg width="16" height="16" viewBox="0 0 16 16">
    <path d="M0 2L16 0V16L0 14Z" fill="#00a3e8" /><path d="M0 8H16M8 1V15" stroke="#5ccbf7" strokeWidth="0.600" />
    <path d="M2 5.500L4.500 4V12" fill="none" stroke="#fff" strokeWidth="1.600" /><rect x="7.800" y="4.500" width="5" height="7" rx="2.300" fill="none" stroke="#fff" strokeWidth="1.600" />
  </svg>
);

const NavBar = ({ scheme, host, path }: { scheme: string; host: string; path: string }) => (
  <NavRow>
    <RoundButton aria-label="Back">
      <svg width="36" height="36" viewBox="0 0 36 36"><circle cx="18" cy="18" r="17.500" fill="#0a84c4" stroke="#777" strokeWidth="0.600" /><path d="M28 18H10M17 11L10 18L17 25" fill="none" stroke="#fff" strokeWidth="3.500" /></svg>
    </RoundButton>
    <RoundButton aria-label="Forward">
      <svg width="26" height="26" viewBox="0 0 26 26"><circle cx="13" cy="13" r="12" fill="#fff" stroke="#b0b0b0" /><path d="M6 11.500H13V7.500L19 13L13 18.500V14.500H6Z" fill="#fff" stroke="#a0a0a0" /></svg>
    </RoundButton>
    <Field>
      <Favicon />
      <Address href="#address"><b>{scheme}</b>://www.<b>{host}</b>{path}</Address>
      <svg width="8" height="5"><path d="M0 0H8L4 5Z" fill="#777" /></svg>
      <svg width="11" height="13" viewBox="0 0 11 13"><path d="M3 6V3.500Q3 1 5.500 1Q8 1 8 3.500V6" fill="none" stroke="#777" strokeWidth="1.500" /><rect x="0.500" y="5.500" width="10" height="7" fill="#777" /></svg>
      <svg width="12" height="13" viewBox="0 0 12 13"><path d="M10 7.500A4.200 4.200 0 1 1 7.500 3" fill="none" stroke="#777" strokeWidth="2" /><path d="M6 0L11 3.500L6 6.500Z" fill="#777" /></svg>
    </Field>
    <Field $w={320}>
      <SearchInput aria-label="Search" placeholder="Search..." />
      <svg width="14" height="14" viewBox="0 0 14 14"><circle cx="8.500" cy="5.500" r="4" fill="none" stroke="#6e6e6e" strokeWidth="1.800" /><path d="M6 8.500L1 13" stroke="#6e6e6e" strokeWidth="2.200" /></svg>
      <svg width="8" height="5"><path d="M0 0H8L4 5Z" fill="#777" /></svg>
    </Field>
    <NavIcons>
      <svg width="17" height="17" viewBox="0 0 17 17"><path d="M1 8.500L8.500 1L11.500 4V2H13.500V6L16 8.500H14V16H10V10H7V16H3V8.500Z" fill="none" stroke="#aaa" /></svg>
      <svg width="17" height="17" viewBox="0 0 17 17"><path d="M8.500 1L10.700 6.500H16L11.800 10L13.500 16L8.500 12.500L3.500 16L5.200 10L1 6.500H6.300Z" fill="none" stroke="#aaa" /></svg>
      <svg width="17" height="17" viewBox="0 0 17 17"><circle cx="8.500" cy="8.500" r="6.800" fill="none" stroke="#aaa" strokeWidth="1.800" strokeDasharray="3 2.340" /><circle cx="8.500" cy="8.500" r="5.500" fill="#fff" stroke="#aaa" /><circle cx="8.500" cy="8.500" r="2.400" fill="none" stroke="#aaa" /></svg>
      <svg width="17" height="17" viewBox="0 0 17 17"><circle cx="8.500" cy="8.500" r="7.500" fill="#fbd63b" stroke="#8d9a98" /><path d="M6.500 4V7.500M10.500 4V7.500M4.500 10Q8.500 13.500 12.500 10" fill="none" stroke="#7a6a20" strokeWidth="1.200" /></svg>
    </NavIcons>
  </NavRow>
);

const fav = (body: React.ReactNode) => <svg width="16" height="16" viewBox="0 0 16 16">{body}</svg>;
const favorites: [string, number, React.ReactNode][] = [
  ['[BUI...', 59, fav(<path d="M8 0C9 4 12 4 12 7C13 6 13 5 14 4C16 9 16 15 8 16C0 15 -1 9 3 3C3 5 4 6 5 6C5 4 8 3 8 0ZM8 10C6 12 6 14 8 14C10 14 10 12 8 10Z" fill="#2a2a2a" fillRule="evenodd" />)],
  ['ASUS...', 66, fav(<><path d="M1.500 13.500V4L3 2.500H7L8 4H14.500V13.500Z" fill="#f0e63c" stroke="#555" /><path d="M4 6L8 10L12 6M6 6H12V11H4Z" fill="none" stroke="#111" /><path d="M8 10H12V12H8Z" fill="#d33" /></>)],
  ['EBay', 52, fav(<><path d="M5 5V3Q8 0 11 3V5" fill="none" stroke="#111" strokeWidth="1.500" /><rect y="4" width="16" height="12" fill="#111" /><path d="M1 6H4.500V13H1Z" fill="#e53238" /><path d="M4.500 6H8V13H4.500Z" fill="#0064d2" /><path d="M8 6H11.500V13H8Z" fill="#f5af02" /><path d="M11.500 6H15V13H11.500Z" fill="#86b817" /></>)],
  ['Fern...', 61, fav(<><rect x="1" width="14" height="16" fill="#3b6a96" /><path d="M3 2L8 5L12 1L13 8L10 16H5L3 9Z" fill="#5b4636" /><path d="M7 4H10L9 15H6Z" fill="#ece4dc" /></>)],
  ['H.T....', 58, fav(<><rect width="16" height="16" fill="#17212f" /><text x="8" y="11" textAnchor="middle" fontFamily="Liberation Sans, sans-serif" fontSize="7" fontWeight="700" fill="#fff">HTG</text></>)],
  ['Inte...', 58, fav(<><ellipse cx="8" cy="8" rx="7.500" ry="5.500" fill="#e9f4fb" stroke="#0f77bd" strokeWidth="1.500" /><text x="8" y="10.500" textAnchor="middle" fontFamily="Liberation Sans, sans-serif" fontSize="7" fontWeight="700" fill="#0f77bd">intel</text></>)],
  ['IS', 37, fav(<path d="M0 14C1 9 2 6 6 4.500C8 4 9 4 10 3.500C11 1.500 14 2 15.500 4C15 6 14 7 12 7.500L11 10L15 13.500V14.500H11L8 11L6.500 12L9 14.500H3L4 11.500L1.500 14.500Z" fill="#f0b323" />)],
  ['Google', 66, fav(<><path d="M13.500 4A6.300 6.300 0 0 0 3 4" fill="none" stroke="#ea4335" strokeWidth="2.800" /><path d="M3 4A6.300 6.300 0 0 0 3 12" fill="none" stroke="#fbbc05" strokeWidth="2.800" /><path d="M3 12A6.300 6.300 0 0 0 12 12.500" fill="none" stroke="#34a853" strokeWidth="2.800" /><path d="M8 8H14Q14 11 12 12.500" fill="none" stroke="#4285f4" strokeWidth="2.800" /></>)],
  ['F.B.', 47, fav(<><rect x="1" y="1" width="14" height="14" fill="#3b5998" /><path d="M13 4H11.500Q10 4 10 5.500V15M7.500 8.500H13" fill="none" stroke="#fff" strokeWidth="2" /></>)],
  ['MVE', 52, fav(<><rect width="16" height="16" fill="#0d4bb0" /><path d="M2 14Q7 12 9 4H14M11 7L8 16" fill="none" stroke="#fff" strokeWidth="2" /></>)],
  ['YouT...', 64, fav(<><rect x="1" y="2.500" width="14" height="11" rx="2.500" fill="#f00" /><path d="M6.500 5.500V10.500L11 8Z" fill="#fff" /></>)],
  ['NOAA', 62, fav(<><circle cx="8" cy="8" r="7" fill="#dfe8f6" stroke="#e06a6a" strokeDasharray="1.500 1.500" /><circle cx="8" cy="8" r="5" fill="#3c78c4" /><path d="M3 8Q6 5 8 8Q10 10 13 7L12 12H5Z" fill="#1a4384" /></>)],
  ['E-Mail', 65, fav(<path d="M5 2L12 8L5 14Z" fill="#0069b4" />)],
  ['P.B.', 47, fav(<><path d="M1 2.500H5L6 4H10L11 2.500H15V14H1Z" fill="none" stroke="#222" strokeWidth="1.300" /><circle cx="8" cy="8.500" r="4" fill="#fff" stroke="#222" strokeWidth="1.200" /><path d="M8 6.500Q10 7 9.500 9" fill="none" stroke="#222" /></>)],
];

const FavoritesBar = () => (
  <Favorites>
    {favorites.map(([label, w, icon]) => <Favorite key={label} $w={w} href="#favorite">{icon}{label}</Favorite>)}
    <Overflow aria-label="More favorites">»</Overflow>
  </Favorites>
);

/* ------------------------------------------------------- page contents */

const BlueBanner = styled.div`
  flex: 1;
  height: 170px;
  background: #00508f;
`;

const Gutter = styled.div<{ $w: number }>`
  flex: none;
  width: ${p => p.$w}px;
`;

const Article = styled.article`
  flex: 1;
  min-width: 0;
  background: #fcfcff;
  font-size: 14px;
  line-height: 20px;
`;

const Figure = styled.figure`
  width: 796px;
  margin: 0 0 0 104px;
`;

const FigureTail = styled(Figure)`
  display: grid;
  grid-template-columns: 541px 1fr;
  grid-template-rows: 136px 22px;
  column-gap: 4px;
  border: 1px solid #1a82d8;
  border-top: 0;
  background: #f0f0f0;
`;

const TailPane = styled.div`
  border: 1px solid #e3e3e3;
  border-top: 0;
  background: #fff;
  &:nth-child(2) { border-left: 2px solid #7a7a7a; }
`;

const TailStatus = styled.div`
  grid-column: 1 / -1;
  display: flex;
  justify-content: flex-end;
  padding: 2px 1px;
`;

const Para = styled.p<{ $top: number; $indent?: boolean; $red?: boolean }>`
  margin: ${p => p.$top}px 0 0;
  padding-left: ${p => (p.$indent ? 541 : 430)}px;
  color: ${p => (p.$red ? '#f00' : '#111')};
  white-space: pre;
`;

const Spacer = styled.div`
  height: 19px;
`;

/* -------------------------------------------------------------- dialog */

const Dialog = styled.section`
  border: 1px solid #8c8c8c;
  background: #fff;
`;

const DialogTitle = styled.header`
  display: flex;
  align-items: center;
  justify-content: space-between;
  height: 29px;
  padding: 0 10px 0 8px;
  color: #999;
`;

const DialogText = styled.p`
  margin: 0;
  padding: 24px 11px 23px;
  font-family: "Noto Sans", sans-serif;
  font-size: 11px;
  line-height: 13px;
  white-space: pre;
`;

const DialogActions = styled.footer`
  display: flex;
  justify-content: flex-end;
  gap: 8px;
  padding: 9px 15px 10px;
  background: #f0f0f0;
`;

const PushButton = styled.button`
  width: 75px;
  height: 23px;
  padding-bottom: 1px;
  border: solid;
  border-width: 1px 2px 2px 1px;
  border-color: #fff #6f6f6f #6f6f6f #fff;
  background: #f0f0f0;
  font-size: 11px;
  text-align: center;
`;

const Taskbar = styled.div`
  position: absolute;
  inset: auto 0 0 48px;
  height: 2px;
  background: linear-gradient(90deg, #3a3a3a 344px, #1f1d20 344px);
`;

const App = () => (
  <>
    <Global />
    <Desktop>
      <Wallpaper width="1920" height="1080" viewBox="0 0 1920 1080" aria-hidden="true">
        <defs>
          <filter id="soft" x="-20%" y="-20%" width="140%" height="140%"><feGaussianBlur stdDeviation="6" /></filter>
          <radialGradient id="haze"><stop offset="0" stopColor="#03090f" /><stop offset="1" stopColor="#000" stopOpacity="0" /></radialGradient>
        </defs>
        <ellipse cx="460" cy="790" rx="130" ry="130" fill="url(#haze)" />
        <g filter="url(#soft)" fill="none">
          <path d="M50 568Q120 545 220 528" stroke="#0a0a78" strokeWidth="7" />
          <path d="M60 555Q140 560 220 545" stroke="#03032c" strokeWidth="12" />
          <path d="M335 705Q370 735 400 780" stroke="#03161a" strokeWidth="10" />
          <path d="M400 705Q440 740 500 760" stroke="#051c22" strokeWidth="10" />
          <path d="M450 705Q480 720 540 770" stroke="#061822" strokeWidth="12" />
        </g>
        <g fill="#3a4cff"><circle cx="147" cy="545" r="1.500" /><circle cx="146" cy="567" r="1.200" /><circle cx="104" cy="541" r="1" /></g>
      </Wallpaper>
      <DesktopIcons />

      <ReplyWindow>
        <Browser>
          <BrowserTop><WindowButtons color="#8a8a8a" w={46} /></BrowserTop>
          <NavBar scheme="https" host="windows10forums.com" path="/threads/event-id-10016-distributedcom.10467/add-reply" />
          <TabStrip>
            <Tab><Favicon /><TabTitle>Reply To Event ID 10016 - Di...</TabTitle><svg width="9" height="9"><path d="M1 1L8 8M8 1L1 8" stroke="#777" strokeWidth="2" /></svg></Tab>
            <NewTab aria-label="New tab"><svg width="16" height="16" viewBox="0 0 16 16"><path d="M1 3H9V13H1Z" fill="#fff" /><path d="M10 1V9M6 5H14M7 2L13 8M13 2L7 8" stroke="#f39a1a" strokeWidth="1.500" /></svg></NewTab>
          </TabStrip>
          <FavoritesBar />
          <Page>
            <BlueBanner />
            <VScroll $w={17}>
              <ScrollButton $h={34} $low aria-label="Scroll up"><Chevron dir="up" size={12} /></ScrollButton>
              <Thumb $h={504} />
              <ScrollButton $h={40} aria-label="Scroll down"><Chevron dir="down" size={12} /></ScrollButton>
            </VScroll>
          </Page>
        </Browser>
      </ReplyWindow>

      <ArticleWindow>
        <Browser>
          <BrowserTop><WindowButtons color="#8a8a8a" w={46} /></BrowserTop>
          <NavBar scheme="https" host="windows10forums.com" path="/articles/event-id-10016-distributedcom.47/" />
          <TabStrip />
          <FavoritesBar />
          <Page>
            <Gutter $w={45} />
            <Article>
              <FigureTail>
                <TailPane /><TailPane />
                <TailStatus><StatusCell $w={124} /><StatusCell $w={80} /><StatusCell $w={1} /></TailStatus>
              </FigureTail>
              <Para $top={52}>ember we are trying to make a modification to a <b>DistributedCOM</b> or</Para>
              <Para $top={0}>hat:</Para>
              <Para $top={0}><b>Services</b> until you see a list of subfolders, once of which is named</Para>
              <Para $top={20}>folder</Para>
              <Para $top={0} $indent>ervices. To make it a little easier to view in the <b>top</b></Para>
              <Para $top={40} $indent $red> to here. Here's a tip for the future to speed things up</Para>
              <Para $top={78} $red>re then View &gt; Detail</Para>
              <Para $top={19}><b>result is:</b></Para>
              <Spacer />
              <Figure><Console detail /></Figure>
            </Article>
            <Gutter $w={44} />
            <VScroll $w={17}>
              <ScrollButton $h={34} $low aria-label="Scroll up"><Chevron dir="up" size={12} /></ScrollButton>
              <Thumb $h={45} $before={508} />
              <ScrollButton $h={28} aria-label="Scroll down"><Chevron dir="down" size={12} /></ScrollButton>
            </VScroll>
          </Page>
        </Browser>
      </ArticleWindow>

      <ConsoleWindow><Console /></ConsoleWindow>

      <DialogWindow>
        <Dialog role="dialog" aria-label="DCOM Configuration Warning!">
          <DialogTitle>
            DCOM Configuration Warning!
            <button aria-label="Close"><svg width="10" height="10"><path d={captionPaths[2]} stroke="#d5d5d5" /></svg></button>
          </DialogTitle>
          <DialogText>{'The CLSID {c82192ee-6cb5-4bc0-9ef0-fb818773790a}, item\nC:\\WINDOWS\\System32\\rundll32.exe and title JumpViewExecuteHelper\nhas the named value AppID, but is not recorded under\n\\\\HKEY_CLASSES_ROOT\\AppId.  Do you wish to record it?'}</DialogText>
          <DialogActions><PushButton>Yes</PushButton><PushButton>No</PushButton></DialogActions>
        </Dialog>
      </DialogWindow>
      <Taskbar />
    </Desktop>
  </>
);

export default App;
